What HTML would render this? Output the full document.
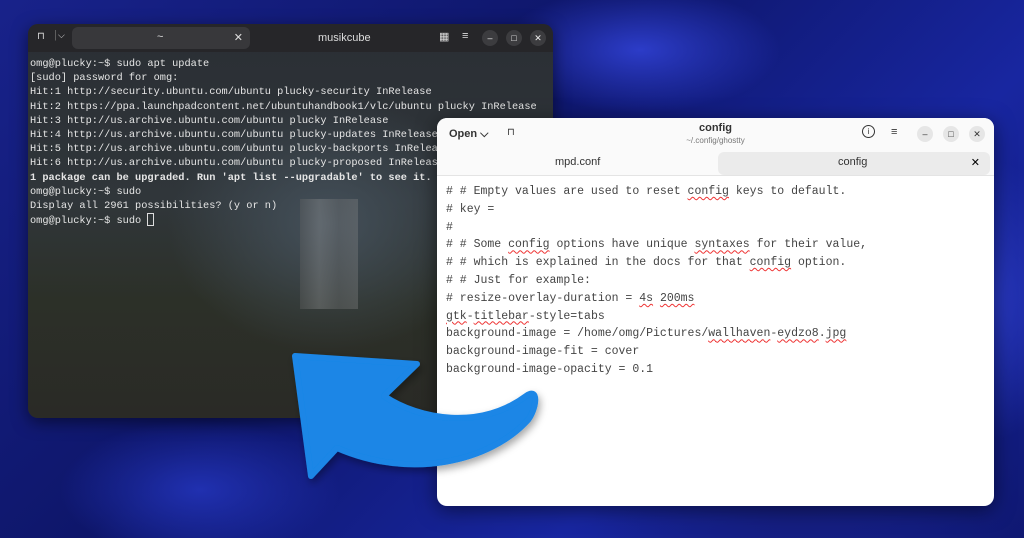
<!DOCTYPE html>
<html><head><style>
*{margin:0;padding:0;box-sizing:border-box}
body{width:1024px;height:538px;overflow:hidden;position:relative;font-family:"Liberation Sans",sans-serif;
background:
radial-gradient(ellipse 200px 90px at 640px 50px,#2c3cc8 0%,transparent 70%),
radial-gradient(ellipse 120px 200px at 990px 300px,#2838c0 0%,transparent 70%),
radial-gradient(ellipse 200px 100px at 200px 490px,#2030b0 0%,transparent 70%),
radial-gradient(ellipse 300px 150px at 800px 520px,#151e80 0%,transparent 70%),
linear-gradient(135deg,#18228a 0%,#0e166a 40%,#1826a0 70%,#0f1872 100%);}
.term{position:absolute;left:28px;top:24px;width:525px;height:394px;border-radius:10px;overflow:hidden;
background:radial-gradient(ellipse 200px 160px at 300px 200px,#44505a 0%,transparent 80%),linear-gradient(180deg,#2a2e34 0%,#30363a 45%,#2c3028 70%,#2a2a26 100%);box-shadow:0 4px 16px rgba(0,0,0,.5)}
.tbar{height:28px;background:#262629;position:relative;color:#ddd;font-size:11px}
.tab{position:absolute;left:44px;top:3px;width:178px;height:22px;background:#38383b;border-radius:6px}
.term pre{font-family:"Liberation Mono",monospace;font-size:10.3px;line-height:14.2px;color:#e6e6e6;padding:5px 0 0 2px;position:relative}
.fall{position:absolute;left:272px;top:175px;width:58px;height:110px;background:linear-gradient(90deg,#666,#999,#777,#888);opacity:.35}
.ed{position:absolute;left:437px;top:118px;width:557px;height:388px;background:#fff;border-radius:10px;overflow:hidden;box-shadow:0 4px 20px rgba(0,0,0,.5)}
.eh{height:32px;background:#fafafa;position:relative;font-size:11px;color:#333}
.et{height:26px;background:#fafafa;position:relative;border-bottom:1px solid #e4e4e4}
.ed pre{font-family:"Liberation Mono",monospace;font-size:11.5px;line-height:17.8px;color:#444;padding:7px 0 0 9px}
u{text-decoration:underline wavy #e33;text-decoration-thickness:1px;text-underline-offset:2px}
.cb{position:absolute;width:16px;height:16px;border-radius:50%;background:#e6e6e6;font-size:9px;text-align:center;line-height:16px;color:#333}
.tb .cb{background:#3c3c3f;color:#eee}
</style></head><body>
<div class="term">
<div class="fall"></div>
<div class="tbar tb">
<span style="position:absolute;left:9px;top:7px;font-size:10px">⊓</span>
<span style="position:absolute;left:26px;top:5px;color:#666">|</span>
<span style="position:absolute;left:30px;top:6px;font-size:9px">⌵</span>
<div class="tab"><span style="position:absolute;left:85px;top:4px">~</span><span style="position:absolute;right:7px;top:4px;font-size:11px">✕</span></div>
<span style="position:absolute;left:290px;top:8px">musikcube</span>
<span style="position:absolute;left:411px;top:6px;font-size:11px">▦</span>
<span style="position:absolute;left:434px;top:6px">≡</span>
<div class="cb" style="left:454px;top:6px">–</div>
<div class="cb" style="left:478px;top:6px">□</div>
<div class="cb" style="left:502px;top:6px">✕</div>
</div>
<pre>omg@plucky:~$ sudo apt update
[sudo] password for omg:
Hit:1 http://security.ubuntu.com/ubuntu plucky-security InRelease
Hit:2 https://ppa.launchpadcontent.net/ubuntuhandbook1/vlc/ubuntu plucky InRelease
Hit:3 http://us.archive.ubuntu.com/ubuntu plucky InRelease
Hit:4 http://us.archive.ubuntu.com/ubuntu plucky-updates InRelease
Hit:5 http://us.archive.ubuntu.com/ubuntu plucky-backports InRelease
Hit:6 http://us.archive.ubuntu.com/ubuntu plucky-proposed InRelease
<b>1 package can be upgraded. Run 'apt list --upgradable' to see it.</b>
omg@plucky:~$ sudo
Display all 2961 possibilities? (y or n)
omg@plucky:~$ sudo <span style="display:inline-block;width:7px;height:13px;border:1px solid #ddd;vertical-align:-3px"></span></pre>
</div>
<div class="ed">
<div class="eh">
<span style="position:absolute;left:12px;top:10px;font-weight:bold">Open ⌵</span>
<span style="position:absolute;left:70px;top:9px;font-size:10px">⊓</span>
<span style="position:absolute;left:0;width:100%;text-align:center;top:4px;font-weight:bold">config</span>
<span style="position:absolute;left:0;width:100%;text-align:center;top:18px;font-size:8px;color:#777">~/.config/ghostty</span>
<span style="position:absolute;left:425px;top:7px;width:13px;height:13px;border:1.3px solid #333;border-radius:50%;font-size:8px;text-align:center;line-height:11px">i</span>
<span style="position:absolute;left:454px;top:8px">≡</span>
<div class="cb" style="left:480px;top:8px">–</div>
<div class="cb" style="left:506px;top:8px">□</div>
<div class="cb" style="left:532px;top:8px">✕</div>
</div>
<div class="et">
<span style="position:absolute;left:118px;top:6px;font-size:11px;color:#333">mpd.conf</span>
<div style="position:absolute;left:281px;top:2px;width:272px;height:23px;background:#ebebeb;border-radius:6px"><span style="position:absolute;left:120px;top:4px;font-size:11px;color:#333">config</span><span style="position:absolute;right:10px;top:4px;font-size:11px">✕</span></div>
</div>
<pre># # Empty values are used to reset <u>config</u> keys to default.
# key =
#
# # Some <u>config</u> options have unique <u>syntaxes</u> for their value,
# # which is explained in the docs for that <u>config</u> option.
# # Just for example:
# resize-overlay-duration = <u>4s</u> <u>200ms</u>
<u>gtk</u>-<u>titlebar</u>-style=tabs
background-image = /home/omg/Pictures/<u>wallhaven</u>-<u>eydzo8</u>.<u>jpg</u>
background-image-fit = cover
background-image-opacity = 0.1</pre>
</div>
<svg style="position:absolute;left:0;top:0" width="1024" height="538">
<defs><filter id="s"><feDropShadow dx="2" dy="4" stdDeviation="4" flood-opacity=".35"/></filter></defs>
<path filter="url(#s)" fill="#1a86e6" stroke="#1a86e6" stroke-width="6" stroke-linejoin="round"
d="M295 356 L417 364 L384 396 C420 420 480 430 526 396 C540 386 536 410 528 420 C490 462 410 480 337 448 L311 476 Z"/>
</svg>
</body></html>
